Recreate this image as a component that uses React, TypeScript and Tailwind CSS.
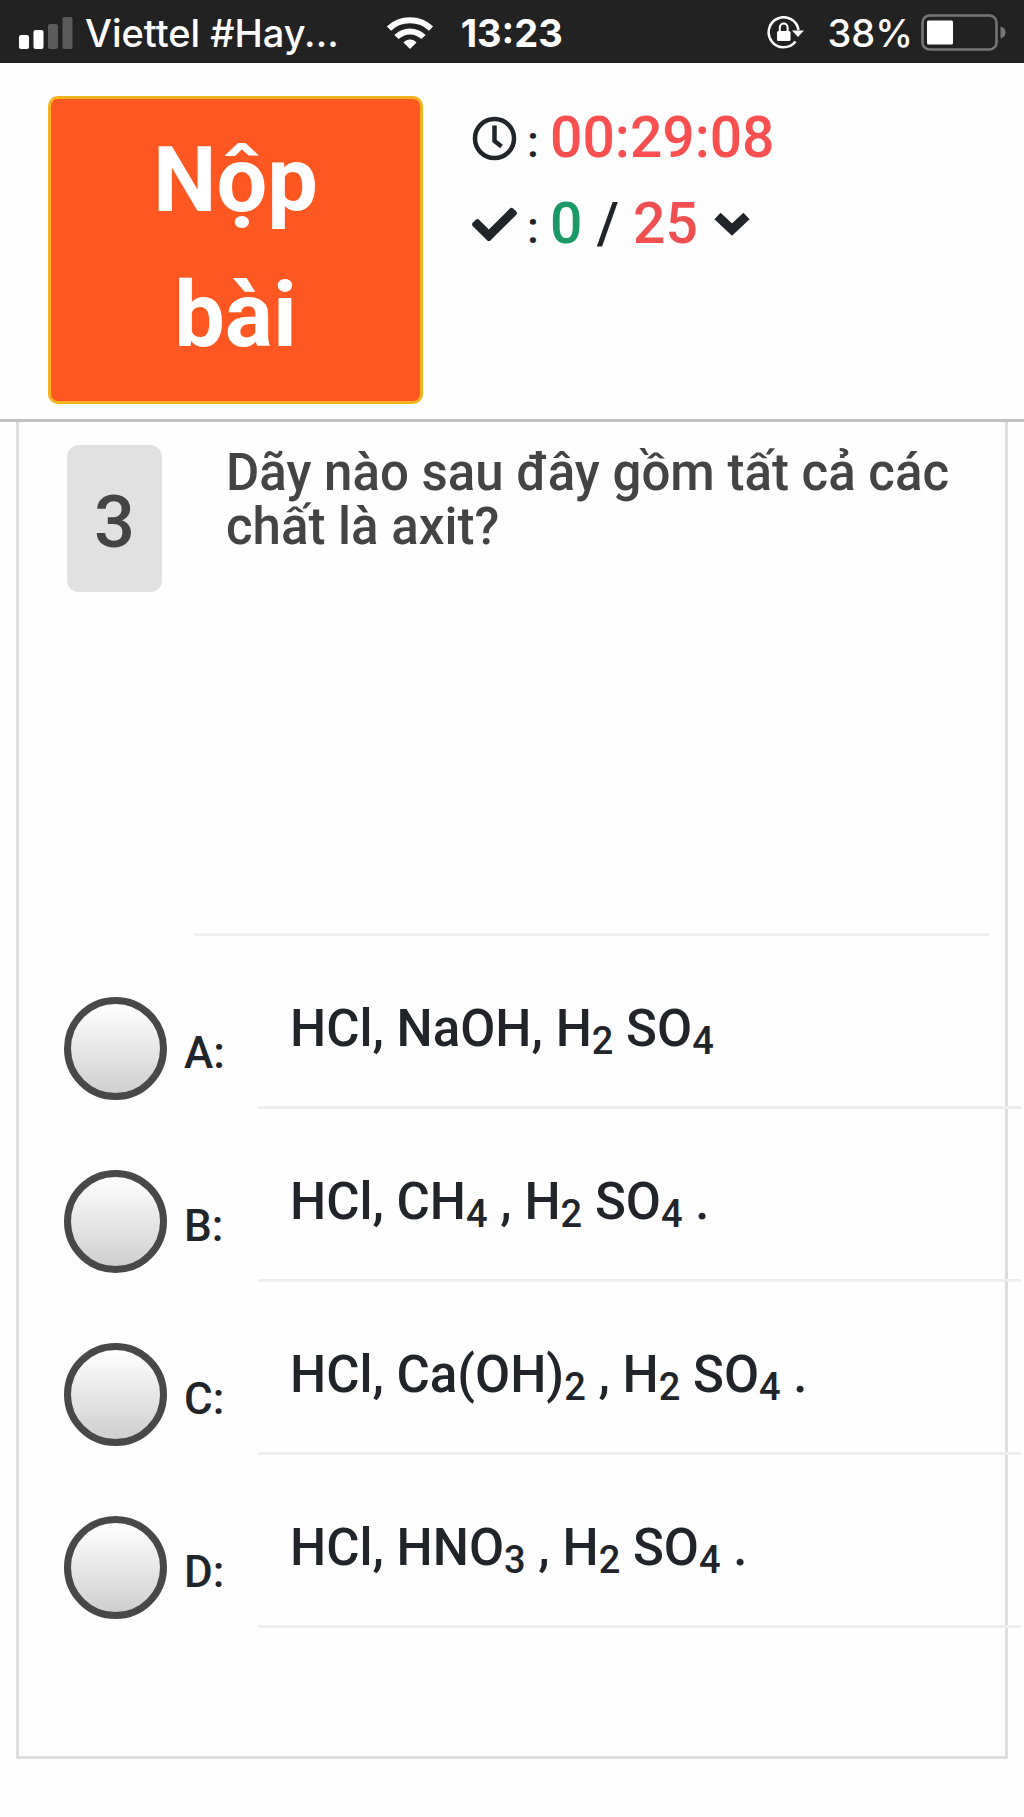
import { useState } from 'react';
import { FaCheck } from 'react-icons/fa';

// Digits written after "_" are set as subscripts
const answers = [
  { key: 'A', formula: 'HCl, NaOH, H_2 SO_4' },
  { key: 'B', formula: 'HCl, CH_4 , H_2 SO_4 .' },
  { key: 'C', formula: 'HCl, Ca(OH)_2 , H_2 SO_4 .' },
  { key: 'D', formula: 'HCl, HNO_3 , H_2 SO_4 .' },
];

function Formula({ text }: { text: string }) {
  return (
    <>
      {text.split(/(_\d)/).map((part, i) =>
        part.startsWith('_') ? (
          <sub key={i} className="text-[38px] leading-none bottom-[-8px]">{part.slice(1)}</sub>
        ) : (
          part
        )
      )}
    </>
  );
}

function StatusBar() {
  return (
    <div className="flex items-center h-[63px] pt-0.5 pl-[19px] pr-[18px] bg-[#222222] text-white font-['Inter',sans-serif] text-[38px] leading-none whitespace-nowrap">
      <svg width="54" height="32" viewBox="0 0 54 32" fill="currentColor" className="shrink-0">
        <rect x="0" y="18" width="10" height="14" rx="2" />
        <rect x="14.500" y="13" width="10" height="19" rx="2" />
        <rect x="29" y="7" width="10" height="25" rx="2" fill="#5b5b5b" />
        <rect x="43.500" y="0" width="10" height="32" rx="2" fill="#5b5b5b" />
      </svg>
      <span className="ml-3 font-medium">Viettel #Hay...</span>
      <svg width="46" height="32" viewBox="0 0 46 32" fill="none" stroke="currentColor" strokeWidth="6" className="ml-12 shrink-0">
        <path d="M2 11.500C13.500 0.500 32.500 0.500 44 11.500" />
        <path d="M9.500 20C17 12.500 29 12.500 36.500 20" />
        <path d="M16.500 25.500C20 21.600 26 21.600 29.500 25.500L23 32Z" fill="currentColor" stroke="none" />
      </svg>
      <span className="ml-7 font-bold">13:23</span>
      <div className="ml-auto flex items-center">
        <svg width="37" height="33" viewBox="0 0 37 33" fill="none" stroke="currentColor" strokeWidth="2.500">
          <path d="M31.500 14A15 15 0 1 0 28.500 25.500" />
          <path d="M25 14.500H37L31 21Z" fill="currentColor" stroke="none" />
          <rect x="10" y="15" width="13.500" height="10" rx="1.500" fill="currentColor" stroke="none" />
          <path d="M12.800 16V11.500a3.900 3.900 0 0 1 7.800 0V16" strokeWidth="2" />
        </svg>
        <span className="ml-6 font-medium">38%</span>
        <svg width="85" height="37" viewBox="0 0 85 37" className="ml-2">
          <rect x="1.500" y="1.500" width="74" height="34" rx="7" fill="none" stroke="#777777" strokeWidth="2.500" />
          <rect x="6" y="6.500" width="26" height="24" rx="1.500" fill="#ffffff" />
          <path d="M79.500 12.500C83 13.500 84.500 15.500 84.500 18.500S83 23.500 79.500 24.500Z" fill="#777777" />
        </svg>
      </div>
    </div>
  );
}

export default function App() {
  const [selected, setSelected] = useState<string | null>(null);
  const [listOpen, setListOpen] = useState(false);

  return (
    <div className="min-h-screen bg-[#fefefe] font-['Roboto',sans-serif] font-medium text-[#212529]">
      <StatusBar />

      {/* Submit button, timer and progress */}
      <header className="flex items-start pt-8 pb-[15px] pl-12 border-b-[3px] border-[#c3c3c3]">
        <button
          type="button"
          className="mt-px w-[375px] shrink-0 px-9 pt-3.5 pb-[18px] rounded-[10px] border-[3px] border-[#f5b21f] bg-[#ff5722] text-white text-[90px] leading-[135px] font-bold"
        >
          Nộp bài
        </button>
        <div className="ml-[49px] text-[57px] leading-[86px]">
          <div className="flex items-center gap-2.5">
            <svg width="45" height="45" viewBox="0 0 45 45" fill="none" stroke="currentColor" strokeWidth="4.500" className="shrink-0">
              <circle cx="22.500" cy="22.500" r="19.500" />
              <path d="M22.500 9.500V25L29.500 30.500" />
            </svg>
            <p>
              <span className="text-[45px] leading-none">: </span>
              <span className="text-[#f9504f]">00:29:08</span>
            </p>
          </div>
          <div className="flex items-center gap-2.5">
            <FaCheck size={45} className="shrink-0" />
            <p>
              <span className="text-[45px] leading-none">: </span>
              <span className="text-[#1b9a68]">0</span> / <span className="text-[#f04f4f]">25</span>
            </p>
            <button
              type="button"
              aria-label="Danh sách câu hỏi"
              aria-expanded={listOpen}
              onClick={() => setListOpen(!listOpen)}
              className="ml-1.5"
            >
              <svg width="36" height="24" viewBox="0 0 36 24" fill="none" stroke="currentColor" strokeWidth="9">
                <path d="M3.500 4L18 17.500L32.500 4" />
              </svg>
            </button>
          </div>
        </div>
      </header>

      <main className="mx-4 pt-[23px] pb-32 border-x-[3px] border-b-[3px] border-[#dddddd]">
        {/* Question */}
        <div className="flex items-start pl-12 pr-4">
          <div className="w-[95px] h-[147px] shrink-0 pt-2 flex items-center justify-center rounded-xl bg-[#e1e1e1] text-[#444444] text-[72px] leading-none">
            3
          </div>
          <div className="ml-8 flex-1 min-h-[491px] pt-px pl-8 border-b-[3px] border-[#eeeeee]">
            <h1 id="question" className="text-[51px] leading-[54px] text-[#444444]">
              Dãy nào sau đây gồm tất cả các chất là axit?
            </h1>
          </div>
        </div>

        {/* Answers */}
        <ul role="radiogroup" aria-labelledby="question">
          {answers.map(a => (
            <li key={a.key}>
              <label className="flex h-[173px] pl-[45px] -mr-4">
                <input
                  type="radio"
                  name="answer"
                  value={a.key}
                  checked={selected === a.key}
                  onChange={() => setSelected(a.key)}
                  className="appearance-none mt-[61px] w-[103px] h-[103px] shrink-0 rounded-full border-[7px] border-[#484848] bg-linear-to-b from-white to-[#cfcfcf] checked:to-[#8f8f8f]"
                />
                <span className="w-[91px] shrink-0 pl-[17px] pt-[90px] text-[44px] leading-[54px]">{a.key}:</span>
                <span className="flex-1 pl-8 pt-[55px] text-[51px] leading-[75px] border-b-[3px] border-[#eeeeee]">
                  <Formula text={a.formula} />
                </span>
              </label>
            </li>
          ))}
        </ul>
      </main>
    </div>
  );
}
